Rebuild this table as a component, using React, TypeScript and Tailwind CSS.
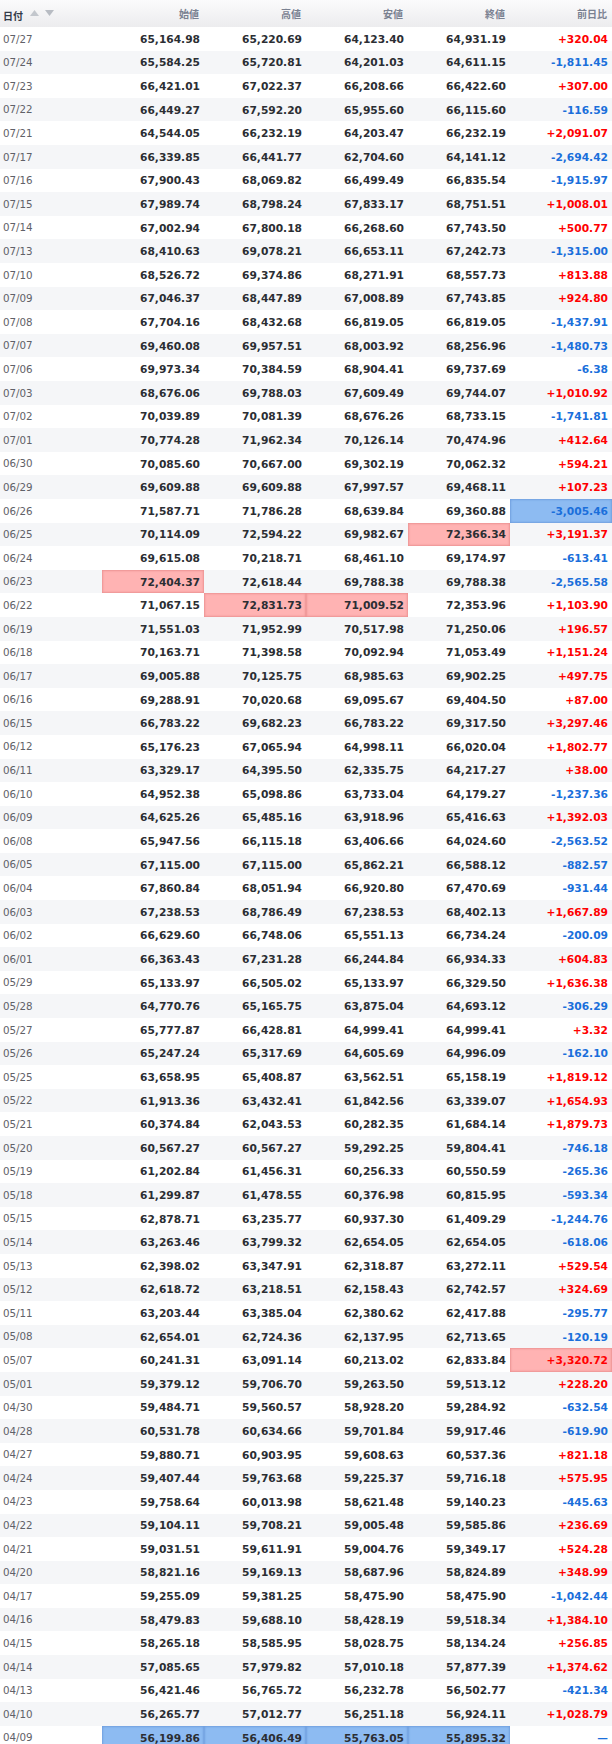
import React from "react";

type Row = [string, string, string, string, string, string, string?];

const rows: Row[] = [
  ["07/27", "65,164.98", "65,220.69", "64,123.40", "64,931.19", "+320.04"],
  ["07/24", "65,584.25", "65,720.81", "64,201.03", "64,611.15", "-1,811.45"],
  ["07/23", "66,421.01", "67,022.37", "66,208.66", "66,422.60", "+307.00"],
  ["07/22", "66,449.27", "67,592.20", "65,955.60", "66,115.60", "-116.59"],
  ["07/21", "64,544.05", "66,232.19", "64,203.47", "66,232.19", "+2,091.07"],
  ["07/17", "66,339.85", "66,441.77", "62,704.60", "64,141.12", "-2,694.42"],
  ["07/16", "67,900.43", "68,069.82", "66,499.49", "66,835.54", "-1,915.97"],
  ["07/15", "67,989.74", "68,798.24", "67,833.17", "68,751.51", "+1,008.01"],
  ["07/14", "67,002.94", "67,800.18", "66,268.60", "67,743.50", "+500.77"],
  ["07/13", "68,410.63", "69,078.21", "66,653.11", "67,242.73", "-1,315.00"],
  ["07/10", "68,526.72", "69,374.86", "68,271.91", "68,557.73", "+813.88"],
  ["07/09", "67,046.37", "68,447.89", "67,008.89", "67,743.85", "+924.80"],
  ["07/08", "67,704.16", "68,432.68", "66,819.05", "66,819.05", "-1,437.91"],
  ["07/07", "69,460.08", "69,957.51", "68,003.92", "68,256.96", "-1,480.73"],
  ["07/06", "69,973.34", "70,384.59", "68,904.41", "69,737.69", "-6.38"],
  ["07/03", "68,676.06", "69,788.03", "67,609.49", "69,744.07", "+1,010.92"],
  ["07/02", "70,039.89", "70,081.39", "68,676.26", "68,733.15", "-1,741.81"],
  ["07/01", "70,774.28", "71,962.34", "70,126.14", "70,474.96", "+412.64"],
  ["06/30", "70,085.60", "70,667.00", "69,302.19", "70,062.32", "+594.21"],
  ["06/29", "69,609.88", "69,609.88", "67,997.57", "69,468.11", "+107.23"],
  ["06/26", "71,587.71", "71,786.28", "68,639.84", "69,360.88", "-3,005.46", "5b"],
  ["06/25", "70,114.09", "72,594.22", "69,982.67", "72,366.34", "+3,191.37", "4r"],
  ["06/24", "69,615.08", "70,218.71", "68,461.10", "69,174.97", "-613.41"],
  ["06/23", "72,404.37", "72,618.44", "69,788.38", "69,788.38", "-2,565.58", "1r"],
  ["06/22", "71,067.15", "72,831.73", "71,009.52", "72,353.96", "+1,103.90", "23r"],
  ["06/19", "71,551.03", "71,952.99", "70,517.98", "71,250.06", "+196.57"],
  ["06/18", "70,163.71", "71,398.58", "70,092.94", "71,053.49", "+1,151.24"],
  ["06/17", "69,005.88", "70,125.75", "68,985.63", "69,902.25", "+497.75"],
  ["06/16", "69,288.91", "70,020.68", "69,095.67", "69,404.50", "+87.00"],
  ["06/15", "66,783.22", "69,682.23", "66,783.22", "69,317.50", "+3,297.46"],
  ["06/12", "65,176.23", "67,065.94", "64,998.11", "66,020.04", "+1,802.77"],
  ["06/11", "63,329.17", "64,395.50", "62,335.75", "64,217.27", "+38.00"],
  ["06/10", "64,952.38", "65,098.86", "63,733.04", "64,179.27", "-1,237.36"],
  ["06/09", "64,625.26", "65,485.16", "63,918.96", "65,416.63", "+1,392.03"],
  ["06/08", "65,947.56", "66,115.18", "63,406.66", "64,024.60", "-2,563.52"],
  ["06/05", "67,115.00", "67,115.00", "65,862.21", "66,588.12", "-882.57"],
  ["06/04", "67,860.84", "68,051.94", "66,920.80", "67,470.69", "-931.44"],
  ["06/03", "67,238.53", "68,786.49", "67,238.53", "68,402.13", "+1,667.89"],
  ["06/02", "66,629.60", "66,748.06", "65,551.13", "66,734.24", "-200.09"],
  ["06/01", "66,363.43", "67,231.28", "66,244.84", "66,934.33", "+604.83"],
  ["05/29", "65,133.97", "66,505.02", "65,133.97", "66,329.50", "+1,636.38"],
  ["05/28", "64,770.76", "65,165.75", "63,875.04", "64,693.12", "-306.29"],
  ["05/27", "65,777.87", "66,428.81", "64,999.41", "64,999.41", "+3.32"],
  ["05/26", "65,247.24", "65,317.69", "64,605.69", "64,996.09", "-162.10"],
  ["05/25", "63,658.95", "65,408.87", "63,562.51", "65,158.19", "+1,819.12"],
  ["05/22", "61,913.36", "63,432.41", "61,842.56", "63,339.07", "+1,654.93"],
  ["05/21", "60,374.84", "62,043.53", "60,282.35", "61,684.14", "+1,879.73"],
  ["05/20", "60,567.27", "60,567.27", "59,292.25", "59,804.41", "-746.18"],
  ["05/19", "61,202.84", "61,456.31", "60,256.33", "60,550.59", "-265.36"],
  ["05/18", "61,299.87", "61,478.55", "60,376.98", "60,815.95", "-593.34"],
  ["05/15", "62,878.71", "63,235.77", "60,937.30", "61,409.29", "-1,244.76"],
  ["05/14", "63,263.46", "63,799.32", "62,654.05", "62,654.05", "-618.06"],
  ["05/13", "62,398.02", "63,347.91", "62,318.87", "63,272.11", "+529.54"],
  ["05/12", "62,618.72", "63,218.51", "62,158.43", "62,742.57", "+324.69"],
  ["05/11", "63,203.44", "63,385.04", "62,380.62", "62,417.88", "-295.77"],
  ["05/08", "62,654.01", "62,724.36", "62,137.95", "62,713.65", "-120.19"],
  ["05/07", "60,241.31", "63,091.14", "60,213.02", "62,833.84", "+3,320.72", "5r"],
  ["05/01", "59,379.12", "59,706.70", "59,263.50", "59,513.12", "+228.20"],
  ["04/30", "59,484.71", "59,560.57", "58,928.20", "59,284.92", "-632.54"],
  ["04/28", "60,531.78", "60,634.66", "59,701.84", "59,917.46", "-619.90"],
  ["04/27", "59,880.71", "60,903.95", "59,608.63", "60,537.36", "+821.18"],
  ["04/24", "59,407.44", "59,763.68", "59,225.37", "59,716.18", "+575.95"],
  ["04/23", "59,758.64", "60,013.98", "58,621.48", "59,140.23", "-445.63"],
  ["04/22", "59,104.11", "59,708.21", "59,005.48", "59,585.86", "+236.69"],
  ["04/21", "59,031.51", "59,611.91", "59,004.76", "59,349.17", "+524.28"],
  ["04/20", "58,821.16", "59,169.13", "58,687.96", "58,824.89", "+348.99"],
  ["04/17", "59,255.09", "59,381.25", "58,475.90", "58,475.90", "-1,042.44"],
  ["04/16", "58,479.83", "59,688.10", "58,428.19", "59,518.34", "+1,384.10"],
  ["04/15", "58,265.18", "58,585.95", "58,028.75", "58,134.24", "+256.85"],
  ["04/14", "57,085.65", "57,979.82", "57,010.18", "57,877.39", "+1,374.62"],
  ["04/13", "56,421.46", "56,765.72", "56,232.78", "56,502.77", "-421.34"],
  ["04/10", "56,265.77", "57,012.77", "56,251.18", "56,924.11", "+1,028.79"],
  ["04/09", "56,199.86", "56,406.49", "55,763.05", "55,895.32", "—", "1234b"],
];

const headers = ["始値", "高値", "安値", "終値", "前日比"];

function cellBg(hl: string | undefined, col: number): string {
  if (!hl) return "";
  const color = hl[hl.length - 1];
  if (!hl.includes(String(col))) return "";
  return color === "r"
    ? "bg-[#ffb3b3] shadow-[inset_0_0_2px_1px_rgba(200,90,90,0.35)]"
    : "bg-[#8dbbf2] shadow-[inset_0_0_2px_1px_rgba(60,110,190,0.35)]";
}

export default function App() {
  return (
    <div className="w-[612px] bg-white font-['DejaVu_Sans','Noto_Sans_CJK_JP',sans-serif]">
      <div className="grid grid-cols-6 h-[27.1px] bg-gradient-to-b from-[#fbfbfc] to-[#ececee]">
        <div className="flex items-center pl-[3px]">
          <span className="text-[10px] font-bold text-[#333a48] pt-[4px] font-['Noto_Sans_CJK_JP',sans-serif]">日付</span>
          <span className="ml-[7px] flex items-center gap-[6px] mb-[2px]">
            <svg width="9" height="6" viewBox="0 0 9 6">
              <polygon points="4.5,0 9,6 0,6" fill="#c3c7cd" />
            </svg>
            <svg width="9" height="6" viewBox="0 0 9 6">
              <polygon points="0,0 9,0 4.5,6" fill="#b8bcc3" />
            </svg>
          </span>
        </div>
        {headers.map((h) => (
          <div key={h} className="flex items-center justify-end pr-[5px]">
            <span className="text-[10px] font-bold text-[#7a8191] font-['Noto_Sans_CJK_JP',sans-serif]">{h}</span>
          </div>
        ))}
      </div>
      {rows.map((r, i) => {
        const hl = r[6];
        const chg = r[5];
        const chgColor = chg.startsWith("+") ? "text-[#ff0000]" : "text-[#1a6fdb]";
        return (
          <div
            key={r[0]}
            className={`grid grid-cols-6 h-[23.6px] ${i % 2 === 1 ? "bg-[#f5f6f8]" : "bg-white"}`}
          >
            <div className="flex items-center pl-[3px] pt-[1px]">
              <span className="text-[10.3px] text-[#5f6168]">{r[0]}</span>
            </div>
            {[1, 2, 3, 4].map((c) => (
              <div
                key={c}
                className={`flex items-center justify-end pr-[4px] pt-[2px] ${cellBg(hl, c)}`}
              >
                <span className="text-[10.67px] font-bold text-[#2b2e33]">{r[c]}</span>
              </div>
            ))}
            <div className={`flex items-center justify-end pr-[4px] pt-[2px] ${cellBg(hl, 5)}`}>
              <span className={`text-[10.67px] font-bold ${chgColor}`}>{chg}</span>
            </div>
          </div>
        );
      })}
    </div>
  );
}
